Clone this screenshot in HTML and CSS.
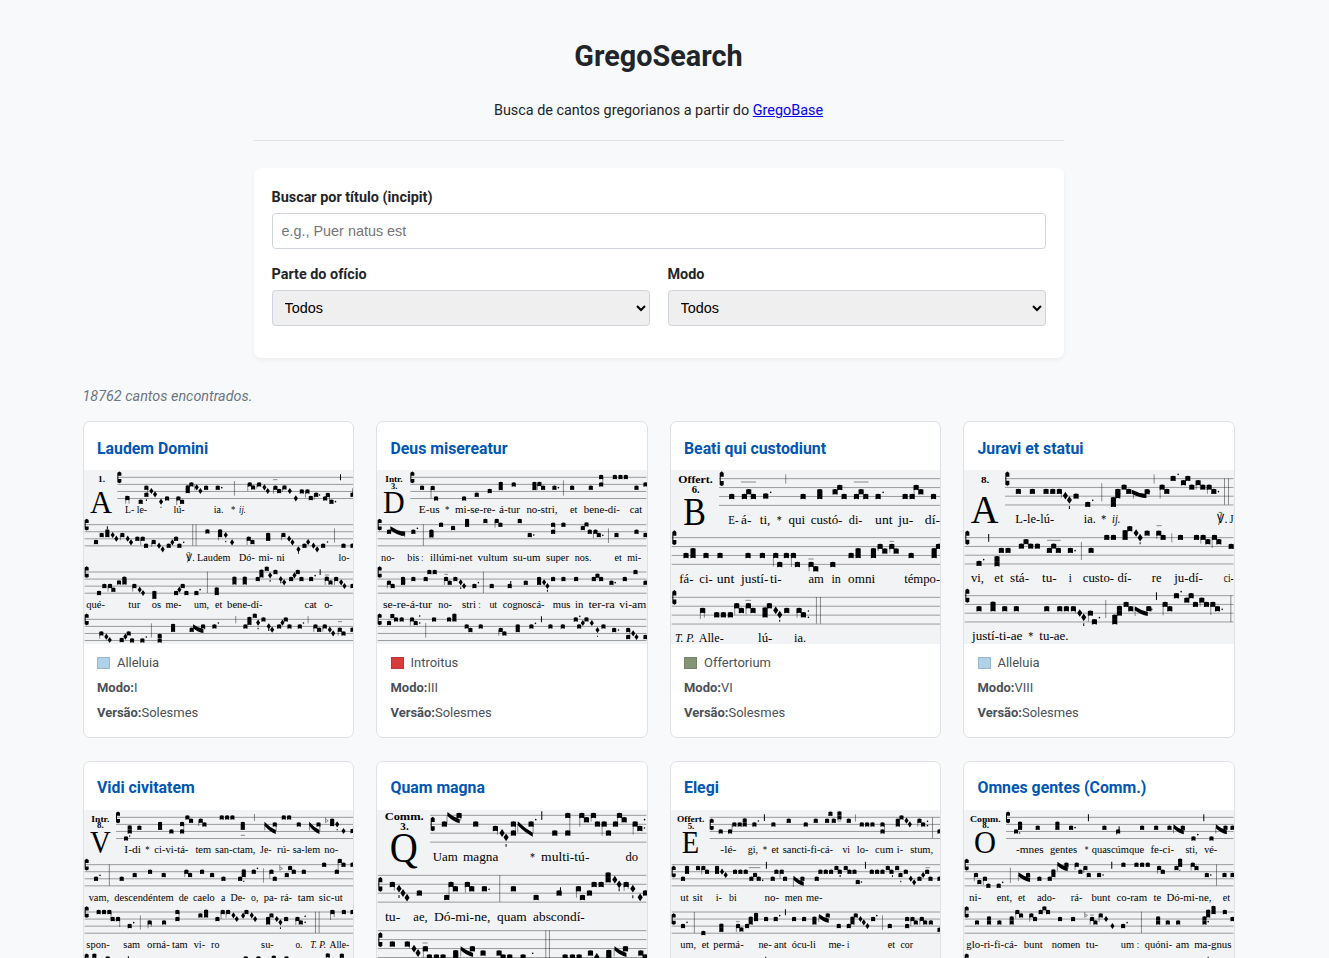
FILE: index.html
```html
<!DOCTYPE html>
<html lang="pt-BR">
<head>
<meta charset="utf-8">
<title>GregoSearch</title>
<link rel="stylesheet" href="styles.css">
</head>
<body>
<header class="header">
  <h1 class="title">GregoSearch</h1>
  <p class="intro">Busca de cantos gregorianos a partir do <a href="#">GregoBase</a></p>
</header>
<form class="filters">
  <label class="field field-wide"><span class="label">Buscar por título (incipit)</span><input class="control" type="text" placeholder="e.g., Puer natus est"></label>
  <label class="field"><span class="label">Parte do ofício</span><select class="control"><option>Todos</option></select></label>
  <label class="field"><span class="label">Modo</span><select class="control"><option>Todos</option></select></label>
</form>
<main class="results">
  <p class="count">18762 cantos encontrados.</p>
  <div class="grid">
    <article class="card"><h2 class="name">Laudem Domini</h2><svg class="score" data-score="laudem"></svg><div class="meta"><p class="part"><i class="swatch alleluia"></i>Alleluia</p><p><b>Modo:</b>I</p><p><b>Versão:</b>Solesmes</p></div></article>
    <article class="card"><h2 class="name">Deus misereatur</h2><svg class="score" data-score="deus"></svg><div class="meta"><p class="part"><i class="swatch introitus"></i>Introitus</p><p><b>Modo:</b>III</p><p><b>Versão:</b>Solesmes</p></div></article>
    <article class="card"><h2 class="name">Beati qui custodiunt</h2><svg class="score" data-score="beati"></svg><div class="meta"><p class="part"><i class="swatch offertorium"></i>Offertorium</p><p><b>Modo:</b>VI</p><p><b>Versão:</b>Solesmes</p></div></article>
    <article class="card"><h2 class="name">Juravi et statui</h2><svg class="score" data-score="juravi"></svg><div class="meta"><p class="part"><i class="swatch alleluia"></i>Alleluia</p><p><b>Modo:</b>VIII</p><p><b>Versão:</b>Solesmes</p></div></article>
    <article class="card"><h2 class="name">Vidi civitatem</h2><svg class="score" data-score="vidi"></svg></article>
    <article class="card"><h2 class="name">Quam magna</h2><svg class="score" data-score="quam"></svg></article>
    <article class="card"><h2 class="name">Elegi</h2><svg class="score" data-score="elegi"></svg></article>
    <article class="card"><h2 class="name">Omnes gentes (Comm.)</h2><svg class="score" data-score="omnes"></svg></article>
  </div>
</main>
<script src="scores.js"></script>
</body>
</html>
```
FILE: styles.css
```css
html { background: #f8f9fb; overflow: hidden; font-size: 14.4px; }
body { margin: 0; width: 1317px; height: 958px; overflow: hidden; background: #f8f9fb; color: #212529; font-family: Roboto, sans-serif; }
.header { box-sizing: border-box; width: 810px; height: 141px; margin: 0 auto 27px; padding-top: 38px; border-bottom: 1px solid #dee2e6; text-align: center; }
.title { margin: 0; font-size: 28.8px; line-height: 36px; font-weight: 700; }
.intro { margin: 25px 0 0; line-height: 23px; }
.intro a { color: #0000ee; }
.filters { box-sizing: border-box; width: 810px; height: 190px; margin: 0 auto; padding: 18px; display: grid; grid-template-columns: 1fr 1fr; grid-auto-rows: 63px; gap: 14px 18px; background: #fff; border-radius: 7px; box-shadow: 0 2px 4px rgba(0,0,0,.05); }
.field { display: flex; flex-direction: column; gap: 4px; }
.field-wide { grid-column: 1 / -1; }
.label { font-weight: 700; line-height: 23px; }
.control { box-sizing: border-box; width: 100%; height: 36px; padding: 0 9px; border: 1px solid #ced4da; border-radius: 3.6px; font: 14.4px "Liberation Sans", Arial, sans-serif; }
select.control { padding: 0 8px; background-color: #efefef; color: #000; }
.results { width: 1152px; margin: 0 auto; }
.count { margin: 27px 0 13px; line-height: 23px; font-style: italic; color: #6c757d; }
.grid { display: grid; grid-template-columns: repeat(4, 1fr); gap: 23px 22px; }
.card { box-sizing: border-box; height: 317px; overflow: hidden; background: #fff; border: 1px solid #dee2e6; border-radius: 7px; }
.name { margin: 0; padding: 15px 13.5px 10px; height: 48px; box-sizing: border-box; font-size: 15.84px; line-height: 23px; font-weight: 700; color: #0056b3; }
.card:nth-child(n+5) .name { padding-top: 14px; }
.score { display: block; width: 100%; height: 174px; background: #f1f3f5; font-family: "Liberation Serif", serif; }
.meta { padding: 8px 13.5px; color: #495057; font-size: 12.96px; display: flex; flex-direction: column; gap: 4px; }
.meta p { margin: 0; line-height: 21px; }
.part { display: flex; align-items: center; gap: 7px; }
.swatch { box-sizing: border-box; width: 13px; height: 12px; border: 1px solid rgba(0,0,0,.12); }
.alleluia { background: #afd2e9; }
.introitus { background: #d63c3c; }
.offertorium { background: #849474; }
.staff { stroke: #000; stroke-opacity: .48; stroke-width: 2.3; fill: none; }
.stem { stroke: #000; stroke-opacity: .65; stroke-width: 2; fill: none; }
.tick { stroke: #000; stroke-width: 3; fill: none; }
```
FILE: scores.js
```js
// Note syntax: x,y punctum; dx,y diamond; .x,y dot; |x,y1,y2 stem; Bx,y1,y2 tick;
// -x1,x2,y episema; /x1,y1,x2,y2 oblique; cx,y clef; fx,y flat.
// Lyrics: baseline, size, then "from,to,text" chunks.
const scores = {
laudem: {
  top: 165, gap: 21.2, staves: [[112,187],[14,329],[14,471],[14,613]],
  initial: ['A', 32, 97, 294, 94],
  notes: `c118,187 142,249 |137,242,266 |147,244,266 182,260 199,239 199,218 |203,218,240 d214,228 d225,238 B199,253,258 d243,260 B243,275,278 261,250 295,250 306,260 |290,250,270 323,228 323,217 334,208 d350,217 d361,228 |328,208,226 |344,208,226 378,218 413,218 .425,218 |463,198,242
509,208 519,217 537,208 d553,217 d563,228 |503,208,228 |530,208,221 586,218 597,228 613,217 d629,228 |580,218,236 |607,217,230 -579,592,194 d647,250 665,229 682,229 692,249 |676,229,248 708,239 .718,240 |702,239,254 735,250 743,240 754,260 .766,260 |748,240,260 B781,178,196 817,239 |817,220,240
c20,329 48,381 65,360 82,360 82,349 B82,334,342 d98,360 d109,371 127,360 d143,371 d153,382 |121,360,376 172,371 188,371 198,392 |182,371,390 221,381 d237,392 d248,403 |215,381,396 266,392 d277,382 288,371 298,392 .311,382 |338,328,392 |348,328,392 382,349 420,360 420,349 d437,360 d456,382 B437,377,382 |415,349,376 506,371 517,381 |501,371,390 564,371 564,360 |569,358,377 610,360 d627,371 d637,382 |604,360,376 d655,403 B655,412,416 673,392 d684,381 d700,392 d711,403 729,392 .742,381 |763,340,383 790,392 817,392
c20,471 57,534 73,513 90,513 100,524 |84,513,530 117,502 133,502 133,491 |139,491,508 163,513 d179,524 d189,534 |158,513,530 223,545 223,534 288,534 d298,524 308,513 319,534 349,534 .360,524 |382,470,534 410,534 410,523 463,502 463,491 494,502 494,491 533,492 544,481 544,470 560,461 d570,481 B570,495,500 586,471 d602,492 d612,502 B602,500,505 633,492 d643,481 653,471 664,492 693,492 .705,482 B720,463,480 740,491 751,502 |735,492,510 -734,747,480 768,492 d783,502 d793,513 |763,492,510 817,513
c20,613 64,655 d79,665 d89,675 |59,655,671 125,675 d136,665 146,655 156,676 187,676 .199,666 |214,625,668 239,676 239,663 279,644 279,633 335,644 /340,632,367,649 369,634 |330,644,651 |374,634,644 403,634 .415,624 |467,603,625 496,634 508,623 508,612 524,602 d534,623 B534,638,643 550,613 d566,634 d576,644 B566,641,648 597,634 d607,623 617,613 628,634 659,634 .670,624 |684,603,625 706,634 717,644 734,634 d749,644 d759,655 |701,634,651 |728,634,650 779,644 790,655 -773,786,620 |774,644,662 817,644`,
  lyrics: [[201,24,'54,75,#1.'],[294,27,'135,201,L- le-','280,314,lú-','401,430,ia.','453,466,*','477,497,_ij.'],[438,27,'319,344,℣.','351,451,Laudem','477,524,Dó-','535,579,mi-','589,614,ni','775,808,lo-'],[579,27,'19,75,qué-','145,181,tur','215,243,os','256,304,me-','342,387,um,','405,427,et','441,547,bene-dí-','673,710,cat','732,758,o-']]
},
deus: {
  top: 15, gap: 21.2, staves: [[112,37],[14,179],[14,321],[14,463]],
  initial: ['D', 32, 96, 144, 94],
  notes: `c118,37 147,68 179,69 189,100 |174,69,100 273,100 311,89 350,78 383,69 383,57 422,58 484,69 484,57 499,57 510,68 |493,57,75 544,68 .556,68 |571,46,92 597,68 653,68 684,58 684,36 |689,36,58 725,36 742,36 758,36 790,68 817,58
c20,179 48,200 /53,188,89,208 90,205 |95,200,216 121,200 .133,190 |151,178,242 175,211 175,200 |181,198,214 204,179 240,189 282,179 282,168 337,168 371,168 382,179 |366,168,188 440,168 470,210 .482,210 540,200 540,179 |545,179,202 571,179 629,189 640,178 650,200 667,200 677,210 .689,211 |661,200,219 |706,190,234 730,210 790,200 817,210
c20,321 48,353 59,363 |43,353,370 90,353 90,342 |96,342,357 121,342 158,342 169,321 185,321 219,342 230,353 247,342 |214,342,360 -214,225,328 d263,352 d273,363 B263,367,372 304,363 .316,353 |331,320,384 356,363 410,363 B413,348,358 458,353 498,353 498,342 d513,352 d523,363 B523,374,380 540,342 571,342 609,342 662,342 673,332 684,342 715,353 .726,353 755,342 787,321 817,353
c20,463 48,474 58,453 69,463 86,463 117,463 128,474 .140,474 .140,453 |112,463,482 |158,474,518 183,463 228,463 244,463 244,452 281,484 292,495 323,484 383,495 394,505 |377,495,512 434,495 434,484 475,484 .487,475 B505,454,472 532,484 569,484 608,463 618,484 640,463 d629,474 d656,474 .620,454 d673,495 B673,512,515 691,484 723,495 .736,495 765,516 765,495 d780,505 d790,516 |770,495,516 817,516`,
  lyrics: [[50,24,'37,89,#Intr.'],[72,23,'54,73,#3.'],[144,27,'137,200,E-us','216,229,*','246,367,mi-se-re-','378,441,á-tur','460,553,no-stri,','591,613,et','632,740,bene-dí-','770,807,cat'],[287,27,'24,65,no-','103,139,bis','145,151,:','171,298,illúmi-net','314,404,vultum','420,502,su-um','519,588,super','605,655,nos.','724,746,et','762,804,mi-'],[429,27,'30,177,se-re-á-tur','196,237,no-','267,309,stri','316,322,:','349,372,ut','389,514,cognoscá-','539,592,mus','606,631,in','646,725,ter-ra','738,819,vi-am']]
},
beati: {
  top: 15, gap: 26.7, staves: [[156,41],[14,218],[14,397]],
  initial: ['B', 51, 118, 179, 121],
  notes: `c164,41 194,94 232,94 245,80 259,94 -222,267,51 296,93 .311,82 |356,28,56 408,94 458,94 458,80 |464,78,100 504,80 518,67 531,94 568,94 582,80 596,94 -560,604,51 633,94 .648,82 714,94 735,94 747,67 761,80 799,94 |741,67,94
c22,218 57,271 78,271 78,257 117,271 159,271 243,271 286,271 326,271 338,298 |319,271,304 358,271 379,271 391,298 |373,271,306 432,298 446,311 -424,440,282 |426,298,319 497,298 552,271 573,271 573,257 619,271 619,257 639,244 653,258 |633,244,258 674,244 687,258 -667,681,229 |668,244,263 732,271 801,271 801,257 814,244
c22,397 107,436 |100,429,462 |112,438,458 149,449 169,449 190,449 209,422 223,436 |203,422,449 244,422 258,436 |237,422,448 -235,252,406 294,449 294,435 307,422 d326,436 d338,449 B338,464,470 359,436 396,436 409,449 |390,436,458 .424,438 .424,457 |448,396,476 |460,396,476`,
  lyrics: [[55,29,'34,137,#Offert.'],[83,28,'74,98,#6.'],[177,34,'184,215,E-','222,253,á-','278,310,ti,','329,344,*','364,414,qui','431,526,custó-','545,586,di-','624,676,unt','693,738,ju-','773,819,dí-'],[354,34,'37,79,fá-','97,137,ci-','149,202,unt','222,304,justí-','309,344,ti-','424,470,am','493,521,in','543,624,omni','711,819,témpo-'],[532,34,'24,83,_T. P.','95,170,Alle-','273,316,lú-','381,417,ia.']]
},
juravi: {
  top: 15, gap: 26.3, staves: [[135,41],[14,218],[14,392]],
  initial: ['A', 34, 116, 174, 120],
  notes: `c142,41 175,79 217,79 258,79 278,79 298,79 |304,79,98 d316,92 d328,105 B328,123,132 348,93 383,118 .398,106 |425,54,109 460,118 460,104 473,92 473,79 492,66 506,79 |480,72,92 /516,78,556,94 561,80 |520,79,101 .568,80 |582,28,56 606,66 620,79 |600,66,101 639,40 .654,28 670,53 683,40 695,66 714,53 728,66 |708,53,73 747,66 761,79 |742,66,86 .775,80 |793,40,119 |805,40,119
c22,218 B86,207,230 57,295 .71,284 111,296 111,281 124,256 144,256 184,243 198,230 212,243 232,243 268,256 281,243 295,256 -261,302,226 331,256 .345,257 |364,231,285 393,256 440,217 460,217 495,217 495,203 509,191 d528,204 d540,218 B540,232,238 561,204 596,204 609,217 -589,605,182 |590,204,222 |635,205,232 661,217 709,217 729,217 743,230 763,217 776,230 |722,217,236 |756,217,249 813,244 |821,244,262
c22,392 57,431 99,431 99,417 134,431 169,431 260,431 299,431 319,431 340,431 |346,431,445 d359,444 d371,457 B371,475,483 391,444 403,470 |385,444,470 .418,458 |437,405,459 464,470 464,456 478,444 478,430 498,418 512,431 /525,428,560,448 566,431 |525,431,453 .575,433 B589,382,405 615,418 629,431 |609,418,451 649,392 .663,380 680,405 693,392 706,418 725,405 739,418 |720,405,425 758,418 772,431 |752,418,450 .786,433 |812,391,471`,
  lyrics: [[55,27,'63,88,#8.'],[174,34,'166,282,L-le-lú-','371,407,ia.','423,439,*','456,481,_ij.','771,802,℣.','808,820,J'],[350,34,'33,72,vi,','103,130,et','150,207,stá-','246,290,tu-','326,335,i','368,462,custo-','472,514,dí-','575,604,re','642,728,ju-dí-','791,820,ci-'],[524,34,'36,187,justí-ti-ae','205,220,*','238,325,tu-ae.']]
},
vidi: {
  top: 165, gap: 21.2, staves: [[108,187],[14,329],[14,471],[14,613]],
  initial: ['V', 32, 93, 294, 94],
  notes: `c114,187 138,250 149,229 149,217 |154,217,233 B149,241,245 178,218 240,218 240,207 274,229 306,229 306,207 |311,207,229 322,187 333,197 362,197 373,208 |356,197,213 425,187 441,187 457,187 488,218 488,207 -482,495,241 |523,177,198 /554,204,584,232 584,208 |554,207,226 |588,207,228 611,187 627,187 656,208 /688,204,715,232 715,208 |688,207,226 |719,207,228 f740,196 756,197 756,207 d771,208 B771,222,226 d790,228 817,228
c20,329 48,371 .60,361 |88,328,392 125,371 164,360 210,350 251,360 319,350 330,360 |314,350,366 366,350 396,360 430,371 480,371 491,360 491,349 B491,377,381 521,350 .532,340 |550,340,383 574,350 584,371 |569,350,371 f603,339 620,360 630,339 641,350 671,350 732,329 770,350 779,318 790,329 |774,318,350 817,329
c20,471 56,471 72,471 88,471 98,492 |93,471,492 114,492 |108,492,499 |119,492,516 149,513 .161,503 |181,481,524 209,502 |204,497,520 |214,502,515 252,502 292,492 292,471 |297,471,495 361,481 378,481 378,470 412,492 428,471 444,471 d460,481 d470,492 |423,471,492 |438,471,488 d489,482 499,471 d515,481 d525,492 564,502 564,492 574,481 d590,492 d601,502 B601,517,522 618,492 652,492 662,502 |647,492,510 .675,484 .675,502 |706,470,534 |717,470,534 757,471 |751,465,495 |762,471,486 791,471 817,471
c20,613 43,602 83,610 B145,604,610 497,610 535,610 581,608 619,610 743,601 785,602`,
  lyrics: [[200,23,'34,88,#Intr.'],[220,22,'51,71,#8.'],[294,27,'133,183,I-di','196,209,*','223,325,ci-vi-tá-','346,393,tem','405,526,san-ctam,','540,574,Je-','591,629,rú-','638,720,sa-lem','732,774,no-'],[437,27,'26,87,vam,','103,281,descendéntem','296,325,de','339,404,caelo','423,436,a','451,496,De-','513,535,o,','551,592,pa-','601,636,rá-','653,702,tam','716,788,sic-ut'],[579,27,'19,89,spon-','130,180,sam','201,269,orná-','276,323,tam','341,375,vi-','393,418,ro','543,581,su-','646,667,o.','690,738,_T. P.','748,807,Alle-']]
},
quam: {
  top: 165, gap: 26.8, staves: [[171,181],[14,361],[14,527]],
  initial: ['Q', 52, 135, 322, 128],
  notes: `c179,207 214,207 /224,175,257,200 258,181 |222,181,207 |263,181,197 308,207 367,220 |373,220,239 d387,234 d399,247 B399,267,275 421,234 421,207 |427,207,237 /435,203,476,240 474,207 |434,207,232 |480,207,235 .488,194 B506,169,195 545,234 584,234 584,181 |590,181,234 626,181 640,194 |620,181,215 661,181 673,207 |654,181,200 693,207 706,234 |687,207,242 727,207 739,181 753,194 |733,181,207 786,207 800,220 |780,207,239 .814,194 .814,219
c22,388 58,388 |64,388,407 d78,401 d90,414 d102,428 B78,420,429 139,414 221,427 234,388 247,401 |228,388,427 283,388 296,401 |277,388,413 334,401 .348,403 |380,361,441 421,401 489,427 558,414 B562,397,413 616,401 628,427 |610,401,428 649,414 663,388 684,388 705,374 705,360 d725,374 d738,388 B738,400,409 759,388 |753,388,408 |765,388,402 d779,401 B779,421,430 d801,427 817,414
c22,554 58,567 103,567 |109,567,580 d123,581 d135,594 157,581 |151,581,608 -148,164,564 169,606 190,606 210,606 248,606 248,593 /264,578,297,601 298,581 |263,581,604 330,594 378,594 390,606 410,606 450,606 .479,595 |518,526,609 |529,526,609 576,606 598,606 618,606 652,594 d671,606 707,606 707,592 /725,578,757,601 757,581 |723,581,604 803,594 816,606`,
  lyrics: [[196,28,'35,152,#Comm.'],[224,28,'82,107,#3.'],[318,34,'179,254,Uam','270,376,magna','471,486,*','504,649,multi-tú-','757,795,do'],[499,34,'36,82,tu-','121,164,ae,','183,352,Dó-mi-ne,','372,461,quam','480,635,abscondí-']]
},
elegi: {
  top: 165, gap: 21.2, staves: [[128,187],[14,329],[14,471]],
  initial: ['E', 46, 97, 294, 94],
  notes: `c134,208 161,229 189,229 202,208 218,208 233,208 233,196 |195,208,229 262,208 .274,198 B292,178,198 319,208 365,197 416,208 446,197 480,197 490,176 500,197 517,187 517,175 -511,522,198 545,197 |565,178,200 584,208 600,208 616,208 646,229 646,208 |652,208,235 692,208 692,197 703,187 d718,197 d728,208 757,197 768,208 .781,199 .781,212 |752,197,215 |796,187,250 817,229
c20,350 48,371 60,350 60,339 93,339 109,339 120,350 |104,339,358 150,350 150,339 d165,350 d176,360 204,350 220,350 236,350 253,371 264,360 275,371 -245,280,338 .287,376 B298,320,341 317,371 328,350 344,350 354,371 |339,350,371 /380,366,407,387 406,371 |379,371,396 449,371 460,350 476,350 492,350 508,339 518,350 536,339 547,350 562,350 572,381 .583,381 B519,360,366 B595,320,341 614,350 630,350 646,350 662,339 673,350 690,339 700,360 716,350 B676,361,366 B701,377,382 d731,371 d741,382 757,371 d768,360 780,350 790,371 -775,788,338 817,371
c20,492 48,513 .60,502 |82,471,534 109,534 163,524 163,512 213,513 223,523 |208,513,531 -207,218,500 240,513 251,502 251,491 267,492 267,480 297,492 326,492 .338,482 B355,463,481 381,492 411,492 442,502 442,491 /457,481,482,498 482,481 |455,481,501 515,513 545,513 556,502 556,491 566,481 d580,492 d590,502 d601,513 618,492 .629,482 |646,481,525 668,513 720,513 720,492 736,492 746,502 764,492 774,502 791,502 |731,492,513 |758,492,510 817,524 B296,605,610`,
  lyrics: [[200,23,'30,112,#Offert.'],[221,22,'62,82,#5.'],[294,27,'160,208,-lé-','242,273,gi,','287,300,*','313,335,et','347,498,sancti-fi-cá-','526,549,vi','569,604,lo-','624,679,cum','689,708,i-','729,798,stum,'],[437,27,'40,65,ut','77,107,sit','146,165,i-','186,209,bi','292,336,no-','353,406,men','417,466,me-'],[579,27,'40,87,um,','104,126,et','139,230,permá-','274,314,ne-','321,359,ant','374,446,ócu-li','484,533,me-','540,547,i','662,684,et','700,738,cor']]
},
omnes: {
  top: 165, gap: 21.2, staves: [[138,187],[14,329],[14,471],[14,613]],
  initial: ['O', 44, 109, 294, 95],
  notes: `c144,187 168,229 180,218 180,206 B179,232,236 |185,206,221 233,218 292,218 292,206 333,218 .345,218 B385,178,199 433,218 474,229 |470,225,240 B477,214,229 546,218 588,218 628,218 /641,212,668,233 668,218 |640,218,235 |673,218,228 700,250 .713,239 B731,178,199 754,250 /768,212,797,233 796,218 |767,218,235 817,218
c20,329 48,360 58,381 |43,360,379 75,371 85,392 |70,371,390 116,392 .128,382 |151,338,384 /176,356,207,376 204,360 |175,360,378 |209,360,374 238,371 269,371 280,360 280,349 /293,324,320,343 319,329 |292,329,348 |324,329,342 350,329 361,350 |345,329,345 376,339 386,360 |371,339,354 417,360 .429,360 B455,320,341 490,329 529,329 546,329 563,329 597,339 608,350 |592,339,356 649,339 660,329 660,317 B659,344,347 698,329 709,339 |693,329,347 740,360 .752,360 |769,328,392 793,360 817,360
c20,471 51,502 87,502 87,490 118,502 155,502 155,490 172,471 183,481 |167,471,490 214,481 225,492 |209,481,500 242,471 253,460 264,471 300,492 339,492 f378,480 396,492 406,502 -390,402,480 |390,492,509 422,481 d438,492 |417,481,501 d457,513 489,513 .501,503 |544,470,534 594,502 594,490 623,502 654,502 733,502 733,490 744,481 744,470 .744,500 760,471 760,459 |765,459,477 794,471 817,492
c20,613 B744,605,610`,
  lyrics: [[200,23,'30,122,#Comm.'],[220,22,'67,87,#8.'],[294,27,'168,251,-mnes','270,351,gentes','374,385,*','395,552,quascúmque','571,642,fe-ci-','676,712,sti,','732,771,vé-'],[437,27,'27,64,ni-','110,156,ent,','174,196,et','231,286,ado-','332,367,rá-','394,451,bunt','469,561,co-ram','580,603,te','619,754,Dó-mi-ne,','788,810,et'],[578,27,'19,172,glo-ri-fi-cá-','191,248,bunt','275,361,nomen','377,415,tu-','482,522,um','531,537,:','554,636,quóni-','647,687,am','702,814,ma-gnus']]
}};

const LYRIC_SCALE = 1.15;
const path = (cls, d) => `<path class="${cls}" d="${d}"/>`;

function drawNotes(source, gap) {
  const w = gap * 0.58, h = gap * 0.56;
  return source.trim().split(/\s+/).map(token => {
    const kind = /^\d/.test(token) ? '' : token[0];
    const [a, b, c, d] = token.slice(kind.length).split(',').map(Number);
    if (kind === 'd') return path('', `M${a} ${b-w*.75}L${a+w*.5} ${b}L${a} ${b+w*.75}L${a-w*.5} ${b}Z`);
    if (kind === '.') return `<circle cx="${a}" cy="${b}" r="2.4"/>`;
    if (kind === '|') return path('stem', `M${a} ${b}V${c}`);
    if (kind === 'B') return path('tick', `M${a} ${b}V${c}`);
    if (kind === '-') return path('stem', `M${a} ${c}H${b}`);
    if (kind === '/') return path('', `M${a-1} ${b-4}Q${(a+c)/2} ${(b+d)/2-1} ${c+3} ${d-7}V${d+5}Q${(a+c)/2} ${(b+d)/2+12} ${a-1} ${b+8}Z`);
    if (kind === 'f') return path('stem', `M${a-4} ${b-9}V${b+7}L${a+4} ${b+1}L${a-3} ${b-3}`);
    if (kind === 'c') return path('', `M${a-6} ${b-gap*.65}L${a} ${b-gap*.82}L${a+6} ${b-gap*.65}V${b-gap*.22}H${a-3}V${b+gap*.25}H${a+6}V${b+gap*.7}L${a} ${b+gap*.82}L${a-6} ${b+gap*.7}Z`);
    return path('', `M${a-w/2} ${b-h/2+1}Q${a} ${b-h/2-2} ${a+w/2} ${b-h/2+1}V${b+h/2+1}Q${a} ${b+h/2-1} ${a-w/2} ${b+h/2+1}Z`);
  }).join('');
}

function drawText(x1, x2, y, size, text, attrs = '') {
  return `<text x="${x1}" y="${y}" font-size="${size}" textLength="${x2-x1}" lengthAdjust="spacingAndGlyphs" ${attrs}>${text}</text>`;
}

document.querySelectorAll('[data-score]').forEach(svg => {
  const s = scores[svg.dataset.score];
  svg.setAttribute('viewBox', `12 ${s.top} 808 522`);
  svg.setAttribute('preserveAspectRatio', 'none');
  let out = s.staves.map(([x, y]) => [0,1,2,3].map(i => path('staff', `M${x} ${y+i*s.gap}H820`)).join('')).join('');
  out += drawNotes(s.notes, s.gap);
  const [letter, x1, x2, y, size] = s.initial;
  out += drawText(x1 - 2, x2 - 1, y, size, letter);
  s.lyrics.forEach(([base, fs, ...chunks]) => chunks.forEach(chunk => {
    const [, a, b, raw] = chunk.match(/^(\d+),(\d+),(.*)$/);
    const bold = raw[0] === '#';
    const attrs = bold ? 'font-weight="bold"' : raw[0] === '_' ? 'font-style="italic"' : '';
    out += drawText(+a, +b, base, bold ? fs : fs * LYRIC_SCALE, raw.replace(/^[#_]/, ''), attrs);
  }));
  svg.innerHTML = out;
});
```
